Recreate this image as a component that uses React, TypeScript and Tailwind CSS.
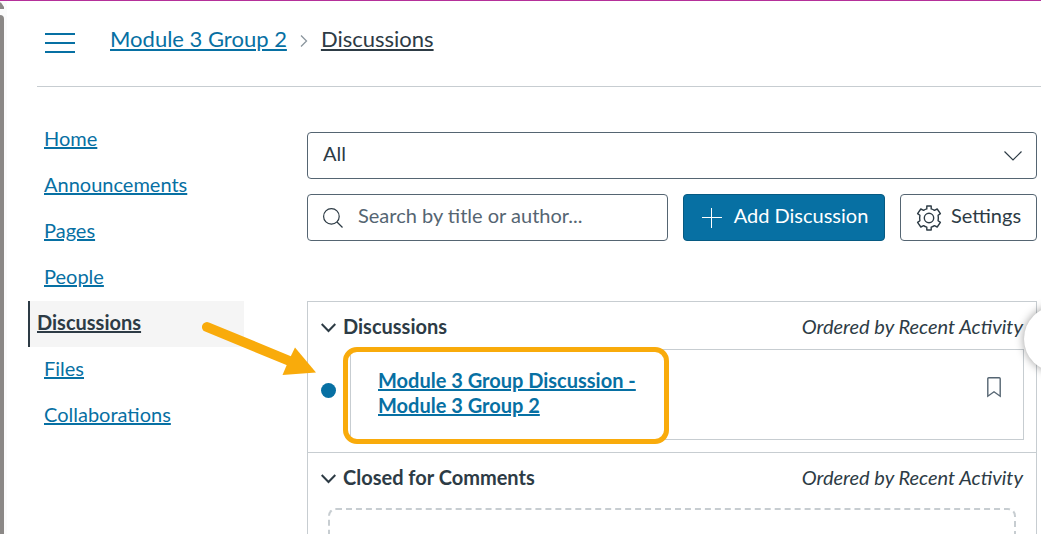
import React from "react";

const navItems = ["Home", "Announcements", "Pages", "People", "Discussions", "Files", "Collaborations"];

function MenuIcon() {
  return (
    <svg width="30" height="20" viewBox="0 0 30 20" stroke="#0770A3" strokeWidth="2" aria-hidden="true">
      <path d="M0 1H30M0 10H30M0 19H30" />
    </svg>
  );
}

function SearchIcon() {
  return (
    <svg className="shrink-0" width="20" height="20" viewBox="0 0 20 20" fill="none" stroke="#2D3B45" strokeWidth="1.2" aria-hidden="true">
      <circle cx="8.4" cy="8.4" r="7.8" />
      <path d="M14 14L19.5 19.5" />
    </svg>
  );
}

function PlusIcon() {
  return (
    <svg width="20" height="20" viewBox="0 0 20 20" stroke="currentColor" strokeWidth="1" aria-hidden="true">
      <path d="M0 9.5H20M9.5 0V20" />
    </svg>
  );
}

function GearIcon() {
  return (
    <svg width="26" height="26" viewBox="0 0 26 26" fill="none" stroke="#2D3B45" strokeWidth="1.4" strokeLinejoin="round" aria-hidden="true">
      <circle cx="13" cy="13" r="4.7" />
      <path d="M10.8 1H15.2V3.9Q17 4.4 18.4 5.4L21.2 4L24.4 8.6L22.1 10.3Q22.6 13 22.1 15.7L24.4 17.4L21.2 22L18.4 20.6Q17 21.6 15.2 22.1V25H10.8V22.1Q9 21.6 7.6 20.6L4.8 22L1.6 17.4L3.9 15.7Q3.4 13 3.9 10.3L1.6 8.6L4.8 4L7.6 5.4Q9 4.4 10.8 3.9Z" />
    </svg>
  );
}

function ToggleIcon() {
  return (
    <svg width="15" height="10" viewBox="0 0 15 10" fill="none" stroke="#2D3B45" strokeWidth="2" aria-hidden="true">
      <path d="M0.7 1L7.5 8L14.3 1" />
    </svg>
  );
}

function SectionHeader({ title }: { title: string }) {
  return (
    <div className="flex h-[47px] items-center justify-between pt-1 pr-[13px] pl-[13px]">
      <button type="button" className="flex items-center gap-[7px] font-bold">
        <ToggleIcon />
        <span className="pb-0.5">{title}</span>
      </button>
      <span className="pb-0.5 italic">Ordered by Recent Activity</span>
    </div>
  );
}

export default function App() {
  return (
    <div className="flex h-screen flex-col overflow-hidden border-t border-[#B5309A] bg-white font-[Lato,sans-serif] text-[20px] leading-[25px] text-[#2D3B45]">
      <div className="flex min-h-0 flex-1">
        <div className="flex w-[7px] shrink-0 flex-col bg-[#FBFBFB]">
          <svg width="4" height="8" viewBox="0 0 4 8" fill="#8B8886" aria-hidden="true">
            <path d="M0 1.5L1 1.5L4 6V8H0Z" />
          </svg>
          <div className="mt-1.5 w-1 flex-1 rounded-tr bg-[#8B8886]" />
        </div>

        <div className="flex min-w-0 flex-1 flex-col pl-[21px]">
          <header className="ml-[9px] flex h-[86px] shrink-0 items-center border-b border-[#C7CDD1] pb-1.5 pl-2">
            <button type="button" aria-label="Toggle navigation menu" className="mt-1">
              <MenuIcon />
            </button>
            <nav aria-label="Breadcrumb" className="ml-[35px] flex items-center pb-1 text-[22px] leading-7">
              <a href="#group" className="text-[#0770A3] underline">Module 3 Group 2</a>
              <svg className="mx-[13px] mt-1" width="8" height="12" viewBox="0 0 8 12" fill="none" stroke="#8B969E" strokeWidth="1.3" aria-hidden="true">
                <path d="M1 0.5L6.5 6L1 11.5" />
              </svg>
              <a href="#discussions" className="underline">Discussions</a>
            </nav>
          </header>

          <div className="flex min-h-0 flex-1">
            <nav aria-label="Course" className="flex w-[216px] shrink-0 flex-col pt-[30px]">
              {navItems.map((item) =>
                item === "Discussions" ? (
                  <a key={item} href="#discussions" aria-current="page" className="flex h-[46px] items-center border-l-2 border-[#2D3B45] bg-[#F5F5F5] pb-1 pl-[7px] font-bold underline">
                    {item}
                  </a>
                ) : (
                  <a key={item} href={"#" + item.toLowerCase()} className="flex h-[46px] items-center pb-1 pl-4 text-[#0770A3] underline">
                    {item}
                  </a>
                )
              )}
            </nav>

            <main className="ml-[63px] flex min-w-0 flex-1 flex-col pt-[45px] pr-1">
              <div className="relative shrink-0">
                <select aria-label="Discussion filter" className="block h-[47px] w-full appearance-none rounded border border-[#556572] bg-white px-[15px] pb-1">
                  <option>All</option>
                </select>
                <svg className="pointer-events-none absolute top-[19px] right-[15px]" width="18" height="10" viewBox="0 0 18 10" fill="none" stroke="#2D3B45" strokeWidth="1.2" aria-hidden="true">
                  <path d="M0.5 0.5L9 9L17.5 0.5" />
                </svg>
              </div>

              <div className="mt-[15px] flex h-[47px] shrink-0 gap-[15px]">
                <label className="flex min-w-0 flex-1 items-center gap-[15px] rounded border border-[#556572] px-[15px]">
                  <SearchIcon />
                  <input type="text" aria-label="Search discussions" placeholder="Search by title or author..." className="min-w-0 flex-1 pb-1 outline-none placeholder:text-[#556572]" />
                </label>
                <button type="button" className="flex w-[202px] shrink-0 items-center justify-center gap-3 rounded border border-[#065A82] bg-[#0770A3] pl-0.5 text-white">
                  <PlusIcon />
                  <span className="pb-1">Add Discussion</span>
                </button>
                <button type="button" className="flex w-[137px] shrink-0 items-center justify-center gap-[9px] rounded border border-[#556572]">
                  <GearIcon />
                  <span className="pb-1">Settings</span>
                </button>
              </div>

              <div className="relative mt-[60px] flex-1 border-x border-t border-[#C7CDD1]">
                <section className="h-[151px] border-b border-[#C7CDD1]">
                  <SectionHeader title="Discussions" />
                  <div className="flex items-center gap-[14px] pr-3 pl-[13px]">
                    <span aria-label="Unread" role="img" className="mt-[-8px] size-[15px] shrink-0 rounded-full bg-[#0770A3]" />
                    <article className="relative flex h-[91px] flex-1 items-start justify-between border border-[#C7CDD1] pt-[18px] pr-[22px] pl-[27px]">
                      <a href="#topic" className="w-[270px] font-bold text-[#0770A3] underline">
                        Module 3 Group Discussion - Module 3 Group 2
                      </a>
                      <button type="button" aria-label="Subscribe" className="mt-[9px]">
                        <svg width="14" height="21" viewBox="0 0 14 21" fill="none" stroke="#556572" strokeWidth="1.4" aria-hidden="true">
                          <path d="M0.8 1.8Q0.8 0.8 1.8 0.8H12.2Q13.2 0.8 13.2 1.8V19.2L7 14.8L0.8 19.2Z" />
                        </svg>
                      </button>
                      <div className="pointer-events-none absolute -top-[3px] -left-2 h-[97px] w-[326px] rounded-[14px] border-5 border-[#F9AB0B]" />
                      <svg className="pointer-events-none absolute -top-[30px] -left-[151px]" width="120" height="60" viewBox="200 320 120 60" fill="#F9AB0B" aria-hidden="true">
                        <path d="M207 327L292 362" stroke="#F9AB0B" strokeWidth="10" strokeLinecap="round" />
                        <path d="M295 347.5L316 372.5L282.5 375L288 362Z" />
                      </svg>
                    </article>
                  </div>
                </section>
                <section>
                  <SectionHeader title="Closed for Comments" />
                  <div className="mt-2 mr-5 ml-5 h-40 rounded-lg border-2 border-dashed border-[#C7CDD1]" />
                </section>
                <button type="button" aria-label="Open panel" className="absolute top-1 -right-[54px] size-[66px] rounded-full bg-white shadow-[0_0_10px_rgba(0,0,0,0.4)]" />
              </div>
            </main>
          </div>
        </div>
      </div>
    </div>
  );
}
